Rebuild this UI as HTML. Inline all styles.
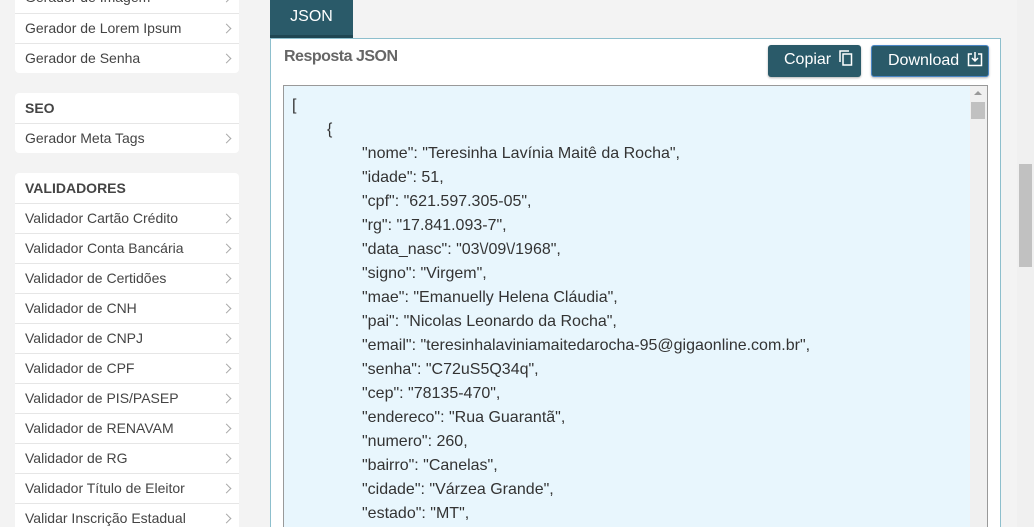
<!DOCTYPE html>
<html><head><meta charset="utf-8"><style>
*{box-sizing:border-box;margin:0;padding:0}
html{width:1034px;height:527px;overflow:hidden}
body{width:1034px;height:527px;overflow:hidden;background:#f3f3f3;font-family:"Liberation Sans",Arial,sans-serif;position:relative}
.card{position:absolute;left:15px;width:224px;background:#fff;border-radius:4px;overflow:hidden}
.it{height:30px;border-top:1px solid #e6e6e6;padding-left:10px;font-size:14px;color:#444;line-height:29px;position:relative}
.it:after{content:"";position:absolute;right:9px;top:11px;width:6px;height:6px;border-right:1.5px solid #aaa;border-top:1.5px solid #aaa;transform:rotate(45deg)}
.hd{height:30px;padding-left:10px;font-size:14px;font-weight:bold;color:#444;line-height:30px}
.tab{position:absolute;left:270px;top:0;width:83px;height:38px;background:#2a5a69;border-bottom:3px solid #1f4652;color:#fff;font-size:16px;text-align:center;line-height:33px}
.panel{position:absolute;left:270px;top:38px;width:731px;height:489px;background:#fff;border:1px solid #8dbfcd;border-bottom:none;overflow:hidden}
.title{position:absolute;left:13px;top:9px;font-size:16px;font-weight:bold;color:#666;letter-spacing:-0.5px}
.btn{position:absolute;top:6px;height:32px;background:#2a5a69;color:#fff;font-size:16px;line-height:30px;border-radius:3px;box-shadow:0 1px 2px rgba(0,0,0,.3)}
.ta{position:absolute;left:12px;top:46px;width:705px;height:460px;background:#e8f6fd;border:1px solid #999;overflow:hidden}
.code{position:absolute;left:8px;top:8px;font-size:16px;color:#333;line-height:24px;white-space:pre;tab-size:35px;-moz-tab-size:35px}
.sb{position:absolute;right:0;top:0;width:17px;height:100%;background:#f0f0f0}
.pg{position:absolute;left:1017px;top:0;width:17px;height:527px;background:#f0f0f0}
</style></head><body>
<div class="card" style="top:-17px"><div class="it" style="border-top:none">Gerador de Imagem</div><div class="it">Gerador de Lorem Ipsum</div><div class="it">Gerador de Senha</div></div>
<div class="card" style="top:93px"><div class="hd">SEO</div><div class="it">Gerador Meta Tags</div></div>
<div class="card" style="top:173px;height:360px"><div class="hd">VALIDADORES</div>
<div class="it">Validador Cartão Crédito</div><div class="it">Validador Conta Bancária</div><div class="it">Validador de Certidões</div><div class="it">Validador de CNH</div><div class="it">Validador de CNPJ</div><div class="it">Validador de CPF</div><div class="it">Validador de PIS/PASEP</div><div class="it">Validador de RENAVAM</div><div class="it">Validador de RG</div><div class="it">Validador Título de Eleitor</div><div class="it">Validar Inscrição Estadual</div></div>
<div class="tab">JSON</div>
<div class="panel">
<div class="title">Resposta JSON</div>
<div class="btn" style="left:497px;width:93px;padding-left:16px">Copiar <svg width="14" height="16" viewBox="0 0 14 16" style="vertical-align:-2px;margin-left:3px"><path d="M1 12V1h9" fill="none" stroke="#fff" stroke-width="1.5"/><rect x="4" y="4" width="8.5" height="11" fill="none" stroke="#fff" stroke-width="1.5"/></svg></div>
<div class="btn" style="left:600px;width:118px;padding-left:16px;border:1px solid #4a86c5">Download <svg width="16" height="16" viewBox="0 0 16 16" style="vertical-align:-2px;margin-left:3px"><path d="M5 3H1.5v11.5h13V3H11M8 1v9M5 7l3 3 3-3" fill="none" stroke="#fff" stroke-width="1.5"/></svg></div>
<div class="ta"><div class="code">[
	{
		"nome": "Teresinha Lavínia Maitê da Rocha",
		"idade": 51,
		"cpf": "621.597.305-05",
		"rg": "17.841.093-7",
		"data_nasc": "03\/09\/1968",
		"signo": "Virgem",
		"mae": "Emanuelly Helena Cláudia",
		"pai": "Nicolas Leonardo da Rocha",
		"email": "teresinhalaviniamaitedarocha-95@gigaonline.com.br",
		"senha": "C72uS5Q34q",
		"cep": "78135-470",
		"endereco": "Rua Guarantã",
		"numero": 260,
		"bairro": "Canelas",
		"cidade": "Várzea Grande",
		"estado": "MT",</div>
<div class="sb"><div style="position:absolute;left:4px;top:5px;border:4px solid transparent;border-bottom:4px solid #999;border-top:none;width:0"></div><div style="position:absolute;left:1px;top:16px;width:14px;height:17px;background:#c1c1c1"></div></div>
</div>
</div>
<div class="pg"><div style="position:absolute;left:2px;top:164px;width:13px;height:103px;background:#c1c1c1"></div></div>
</body></html>
